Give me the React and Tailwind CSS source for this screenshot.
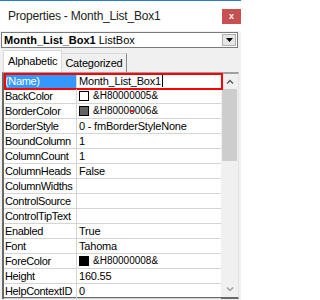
import React from "react";

const rows = [
  { n: "(Name)", v: "Month_List_Box1", sel: true },
  { n: "BackColor", v: "&H80000005&", sw: "bg-white" },
  { n: "BorderColor", v: "&H80000006&", sw: "bg-[#636363]" },
  { n: "BorderStyle", v: "0 - fmBorderStyleNone" },
  { n: "BoundColumn", v: "1" },
  { n: "ColumnCount", v: "1" },
  { n: "ColumnHeads", v: "False" },
  { n: "ColumnWidths", v: "" },
  { n: "ControlSource", v: "" },
  { n: "ControlTipText", v: "" },
  { n: "Enabled", v: "True" },
  { n: "Font", v: "Tahoma" },
  { n: "ForeColor", v: "&H80000008&", sw: "bg-black" },
  { n: "Height", v: "160.55" },
  { n: "HelpContextID", v: "0" },
];

export default function App() {
  return (
    <div
      className="w-[241px] h-[300px] bg-[#f0f0f0] overflow-hidden flex flex-col border-t border-[#2b7ad6] text-black"
      style={{ fontFamily: '"Liberation Sans", Arial, sans-serif' }}
    >
      {/* Title bar */}
      <div className="h-[30px] bg-white flex items-start shrink-0">
        <div className="pl-[8px] pt-[7px] text-[12px] leading-[16px] text-[#222] tracking-[-0.2px]">
          Properties - Month_List_Box1
        </div>
        <div className="ml-auto mt-[8px] w-[19px] h-[15px] bg-[#c75050] flex items-center justify-center text-white text-[9px] leading-none font-bold">
          x
        </div>
      </div>

      {/* Object dropdown */}
      <div className="mt-[1px] ml-[1px] w-[237px] h-[16px] bg-white border border-[#7a7a7a] flex items-center shrink-0">
        <div className="pl-[2px] text-[11px] leading-[14px] whitespace-nowrap">
          <span className="font-bold">Month_List_Box1</span> ListBox
        </div>
        <div className="ml-auto mr-[1px] w-[14px] h-[12px] bg-[#e6e6e6] border border-[#b0b0b0] flex items-center justify-center">
          <svg width="7" height="4" viewBox="0 0 7 4">
            <path d="M0 0h7L3.5 4z" fill="#000" />
          </svg>
        </div>
      </div>

      {/* Tabs */}
      <div className="mt-[2px] h-[22px] flex items-end pl-[3px] shrink-0 relative tracking-[-0.2px]">
        <div className="h-[22px] px-[4px] bg-white border border-[#d9d9d9] border-b-0 flex items-center text-[11px] z-10">
          Alphabetic
        </div>
        <div className="h-[19px] px-[3px] bg-[#f0f0f0] border border-l-0 border-[#8c8c8c] border-b-0 border-t-[#d9d9d9] flex items-center text-[11px]">
          Categorized
        </div>
      </div>

      {/* Grid */}
      <div className="ml-[2px] w-[237px] h-[227px] border-l-[2px] border-t-[2px] border-b-[2px] border-r border-l-[#696969] border-t-[#a0a0a0] border-b-[#696969] border-r-[#e3e3e3] bg-white flex shrink-0">
        <div className="flex-1 flex flex-col">
          {rows.map((r, i) => (
            <div key={i} className="h-[15px] flex shrink-0 relative">
              <div
                className={
                  "w-[73px] pl-[1px] text-[11px] leading-[14px] tracking-[-0.35px] whitespace-nowrap overflow-hidden border-b border-r border-[#d4d4d4] " +
                  (r.sel ? "bg-[#3399ff] text-white" : "")
                }
              >
                {r.n}
              </div>
              <div className="flex-1 border-b border-[#d4d4d4] flex items-start pl-[2px] text-[11px] leading-[14px] tracking-[-0.2px] whitespace-nowrap overflow-hidden">
                {r.sw && (
                  <span className={"mt-[2px] mr-[4px] w-[10px] h-[10px] border border-black shrink-0 " + r.sw}></span>
                )}
                <span className={r.sw ? "text-[10px] tracking-[0px] relative" : ""}>
                  {r.v}
                  {r.n === "BorderColor" && (
                    <span className="absolute left-[37px] top-[6px] w-[4px] h-[2px] bg-[#e02020]"></span>
                  )}
                </span>
                {r.sel && <span className="ml-[1px] mt-[1px] w-[1px] h-[12px] bg-black"></span>}
              </div>
              {r.sel && (
                <div className="absolute left-0 top-[-1px] w-[219px] h-[17px] border-[2px] border-[#ff0000] pointer-events-none"></div>
              )}
            </div>
          ))}
        </div>
        {/* Scrollbar */}
        <div className="w-[17px] bg-[#f0f0f0] flex flex-col">
          <div className="h-[15px] flex items-center justify-center">
            <svg width="8" height="5" viewBox="0 0 8 5">
              <path d="M1 4.5L4 1.5L7 4.5" stroke="#606060" strokeWidth="1.5" fill="none" />
            </svg>
          </div>
          <div className="mx-[1px] h-[72px] bg-[#cdcdcd]"></div>
          <div className="flex-1"></div>
          <div className="h-[15px] flex items-center justify-center">
            <svg width="8" height="5" viewBox="0 0 8 5">
              <path d="M1 0.5L4 3.5L7 0.5" stroke="#a0a0a0" strokeWidth="1.5" fill="none" />
            </svg>
          </div>
        </div>
      </div>
    </div>
  );
}
